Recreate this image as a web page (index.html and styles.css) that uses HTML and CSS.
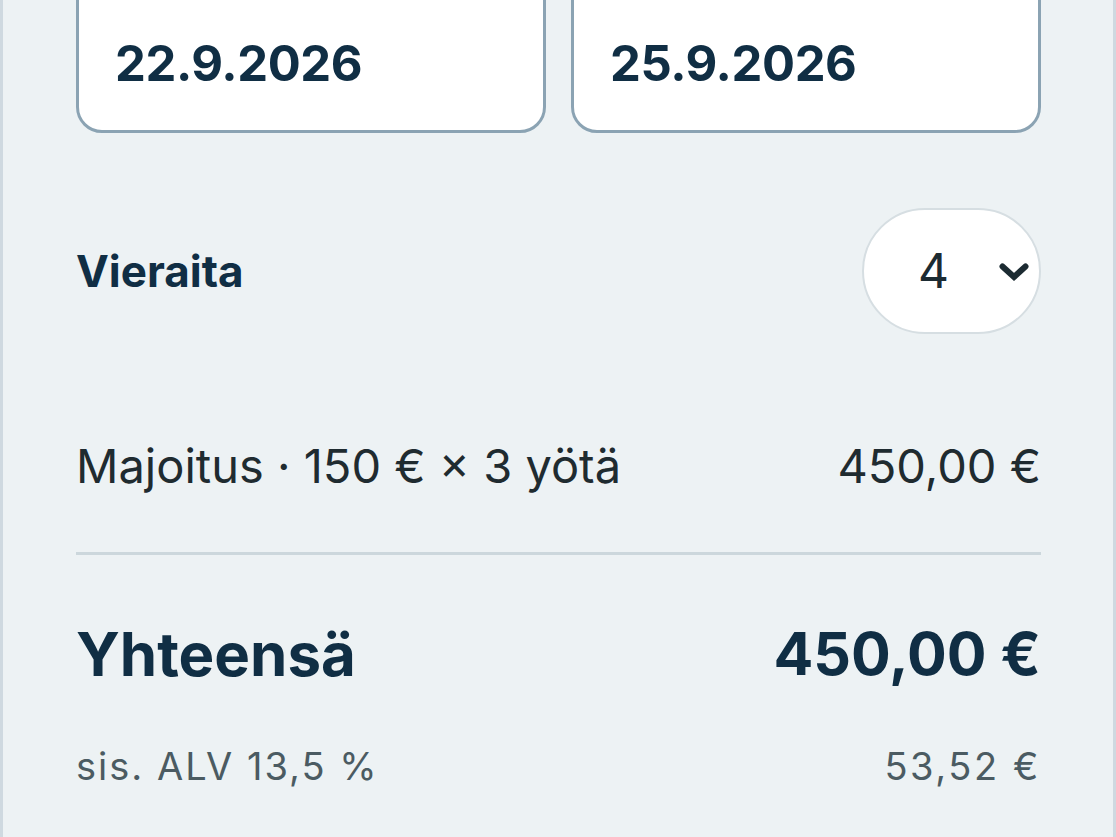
FILE: index.html
```html
<!DOCTYPE html>
<html lang="fi">
<head>
<meta charset="utf-8">
<title>Varaus</title>
<link rel="stylesheet" href="styles.css">
</head>
<body>
<main class="panel">
  <div class="dates">
    <div class="date-box"><span class="date-value">22.9.2026</span></div>
    <div class="date-box"><span class="date-value">25.9.2026</span></div>
  </div>

  <div class="row guests">
    <span class="label">Vieraita</span>
    <div class="select-pill">
      <span class="select-value">4</span>
      <svg class="chevron" width="30" height="20" viewBox="0 0 30 20" aria-hidden="true">
        <path d="M3.5 4.5 L15 15 L26.5 4.5" fill="none" stroke="#1c2b32" stroke-width="6" stroke-linecap="round" stroke-linejoin="miter"/>
      </svg>
    </div>
  </div>

  <div class="row line-item">
    <span>Majoitus · 150 € × 3 yötä</span>
    <span>450,00 €</span>
  </div>

  <div class="divider"></div>

  <div class="row total">
    <span>Yhteensä</span>
    <span>450,00 €</span>
  </div>

  <div class="row vat">
    <span>sis. ALV 13,5 %</span>
    <span>53,52 €</span>
  </div>
</main>
</body>
</html>
```

FILE: styles.css
```css
* { box-sizing: border-box; }

html, body {
  margin: 0;
  padding: 0;
  height: 100%;
  overflow: hidden;
}

body {
  background: #edf2f4;
  font-family: Inter, "Noto Sans", "Liberation Sans", sans-serif;
  color: #1f2b30;
}

.panel {
  height: 100%;
  border-left: 3px solid #cfd9e0;
  border-right: 3px solid #cfd9e0;
  padding: 0 72px 0 73px;
  display: flex;
  flex-direction: column;
}

.dates {
  display: flex;
  gap: 25px;
  margin-top: -30px;
}

.date-box {
  flex: 1;
  background: #ffffff;
  border: 3px solid #8ba3b3;
  border-radius: 26px;
  padding: 61px 36px 36px 36px;
}

.date-value {
  display: block;
  font-size: 49px;
  line-height: 60px;
  font-weight: 700;
  letter-spacing: -0.4px;
  color: #102e44;
}

.row {
  display: flex;
  justify-content: space-between;
  align-items: center;
}

.guests {
  margin-top: 75px;
}

.label {
  font-size: 44px;
  font-weight: 700;
  color: #102e44;
  line-height: 52px;
}

.select-pill {
  width: 179px;
  height: 126px;
  background: #ffffff;
  border: 2px solid #d6dee2;
  border-radius: 63px;
  display: flex;
  align-items: center;
  padding: 0 10px 0 54px;
}

.select-value {
  width: 30px;
  font-size: 48px;
  line-height: 56px;
  color: #1c2b32;
  text-align: center;
}

.chevron {
  margin-left: auto;
  margin-top: 2px;
}

.line-item {
  margin-top: 104px;
  font-size: 47px;
  line-height: 56px;
  color: #1f2b30;
}

.divider {
  margin-top: 58px;
  height: 3px;
  background: #ccd7dc;
}

.total {
  margin-top: 64px;
  font-size: 60px;
  line-height: 70px;
  font-weight: 700;
  color: #102e44;
}

.total span:last-child {
  font-size: 59px;
}

.vat {
  margin-top: 54px;
  font-size: 38px;
  line-height: 46px;
  letter-spacing: 2px;
  color: #4b5b62;
}

.vat span:last-child {
  letter-spacing: 2.6px;
}
```
